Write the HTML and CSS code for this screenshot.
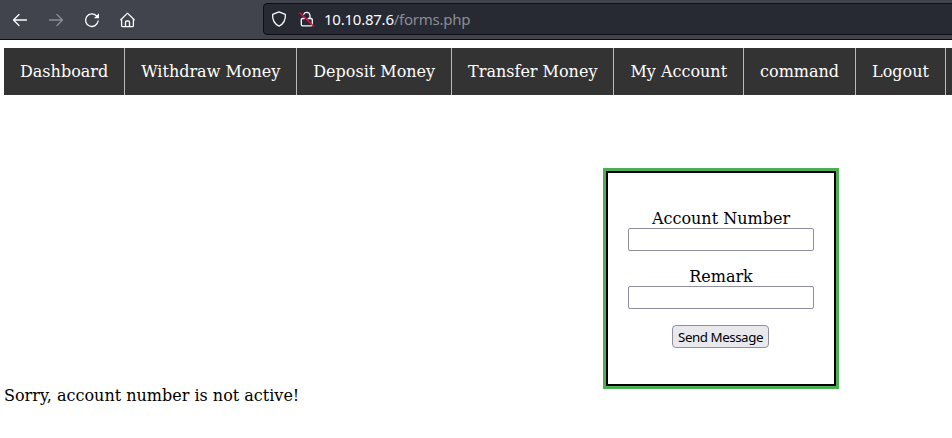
FILE: index.html
```html
<!DOCTYPE html>
<html lang="en">
<head>
<meta charset="utf-8">
<title>Forms</title>
<link rel="stylesheet" href="styles.css">
</head>
<body>
<header class="toolbar">
  <svg class="icon" viewBox="0 0 16 16"><path d="M14.5 8H1.5M7 2.5L1.5 8L7 13.5"/></svg>
  <svg class="icon disabled" viewBox="0 0 16 16"><path d="M1.5 8H14.5M9 2.5L14.5 8L9 13.5"/></svg>
  <svg class="icon" viewBox="0 0 16 16"><path d="M12.6 4A6.3 6.3 0 1 0 14.1 9"/><path class="solid" d="M15 1.2V6.2H10Z"/></svg>
  <svg class="icon" viewBox="0 0 16 16"><path d="M.8 7.8L7.5 1.1L14.2 7.8M1.6 7.2V13.5Q1.6 14.7 2.8 14.7H12.2Q13.4 14.7 13.4 13.5V7.2M5.5 14.5V10.2Q5.5 9 6.7 9H8.3Q9.5 9 9.5 10.2V14.5"/></svg>
  <div class="urlbar">
    <svg class="icon" viewBox="0 0 16 16"><path d="M8 .9L14.3 3.3C14.8 8.5 12.7 12.8 8 15.2C3.3 12.8 1.2 8.5 1.7 3.3Z"/></svg>
    <svg class="icon lock" viewBox="0 0 16 16"><path d="M4.8 3.2A3.3 3.3 0 0 1 11 4.3V7.4M5.3 7.5H3.5Q2.3 7.5 2.3 8.7V13.6Q2.3 14.8 3.5 14.8H12.1Q13.3 14.8 13.3 13.6V8.7Q13.3 7.5 12.1 7.5H9.2"/><path class="slash" d="M1 2L14.4 15"/></svg>
    <span class="url"><span class="host">10.10.87.6</span>/forms.php</span>
  </div>
</header>
<main class="page">
  <nav class="menu">
    <a>Dashboard</a><a>Withdraw Money</a><a>Deposit Money</a><a>Transfer Money</a><a>My Account</a><a>command</a><a>Logout</a>
  </nav>
  <form class="card">
    <label class="field">Account Number<input type="text"></label>
    <label class="field">Remark<input type="text"></label>
    <button type="button">Send Message</button>
  </form>
  <p class="message">Sorry, account number is not active!</p>
</main>
</body>
</html>
```
FILE: styles.css
```css
* { box-sizing: border-box; }
body {
  margin: 0;
  background: #fff;
  color: #000;
  font: 16px/19px "DejaVu Serif", serif;
  overflow: hidden;
}
.toolbar {
  display: flex;
  align-items: center;
  gap: 20px;
  height: 40px;
  padding-left: 12px;
  background: #42444d;
  border-bottom: 1px solid #0c0c0d;
}
.icon {
  flex: none;
  width: 16px;
  height: 16px;
  fill: none;
  stroke: #fbfbfe;
  stroke-width: 1.3;
  stroke-linecap: round;
  stroke-linejoin: round;
}
.disabled { opacity: .4; }
.icon .solid { fill: #fbfbfe; stroke: none; }
.icon .slash { stroke: #e8103f; stroke-width: 1.5; }
.urlbar {
  display: flex;
  align-items: center;
  flex: 1;
  height: 32px;
  margin: 0 -8px 1px 107px;
  padding-left: 7px;
  border: 1px solid #0e0f14;
  border-radius: 4px;
  background: #272933;
}
.lock { margin-left: 12px; }
.url {
  margin-left: 9px;
  color: #8c8d94;
  font: 15px/20px "Noto Sans", sans-serif;
  letter-spacing: -.24px;
  white-space: nowrap;
}
.host { color: #fbfbfe; }
.page { padding: 8px 0 0 4px; }
.menu {
  display: flex;
  height: 47px;
  background: #333;
}
.menu a {
  padding: 14px 16px;
  border-right: 1px solid #bbb;
  color: #fff;
  white-space: nowrap;
}
.card {
  display: flex;
  flex-direction: column;
  align-items: center;
  width: 236px;
  height: 221px;
  margin: 73px 0 0 599px;
  padding: 38px 0 0 0;
  border: 3px solid #4caf50;
  box-shadow: inset 0 0 0 2px #000;
}
.field {
  display: flex;
  flex-direction: column;
  align-items: center;
  height: 58px;
}
.field input {
  width: 186px;
  height: 23px;
  margin: 0;
  border: 1px solid #8f8f9d;
  border-radius: 2px;
  background: #fff;
}
.card button {
  width: 97px;
  height: 23px;
  margin: 0 1px 0 0;
  padding: 1px 0 0;
  border: 1px solid #8f8f9d;
  border-radius: 4px;
  background: #e9e9ed;
  color: #000;
  font: 13.333px/20px "Noto Sans", sans-serif;
  letter-spacing: -.45px;
  white-space: nowrap;
}
.message { margin: -3px 0 0; }
```
